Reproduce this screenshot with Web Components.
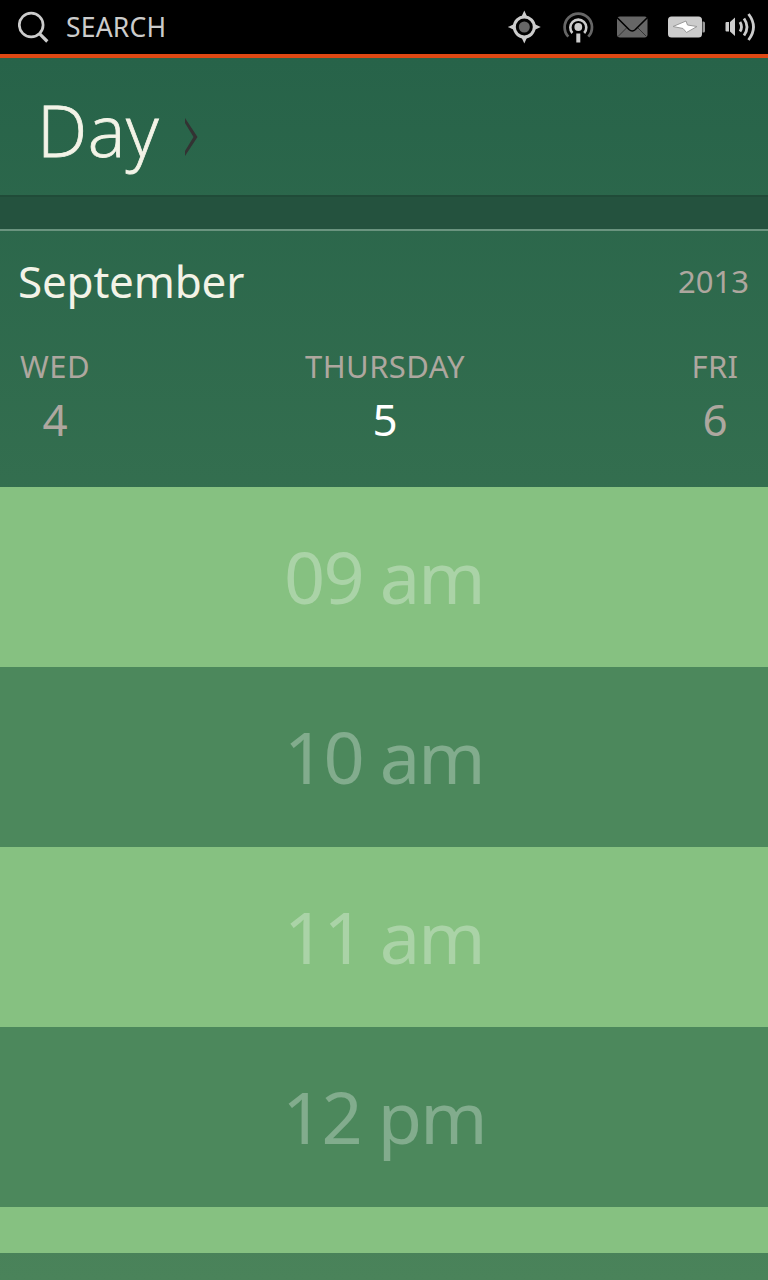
<!DOCTYPE html>
<html lang="en">
<head>
<meta charset="utf-8">
<title>Calendar</title>
<style>
  html, body {
    margin: 0;
    height: 100%;
    overflow: hidden;
  }

  body {
    background: #000;
    font-family: "Noto Sans", "Open Sans", sans-serif;
  }
</style>
</head>
<body>
<calendar-app></calendar-app>

<script>
class StatusBar extends HTMLElement {
  constructor() {
    super()
    this.attachShadow({ mode: 'open' })
  }

  connectedCallback() {
    this.render()
  }

  render() {
    this.shadowRoot.innerHTML = `
      <style>
        :host {
          height: 58px;
          padding: 0 8px 0 18px;

          display: flex;
          align-items: center;

          box-sizing: border-box;
          background-color: #000;
          border-bottom: 4px solid #dd4814;
          color: #ccc;
        }

        .search {
          flex: 1;

          display: flex;
          align-items: center;
          gap: 16px;

          font-size: 26.5px;
          line-height: 54px;
          letter-spacing: 0.2px;
        }

        .icons {
          display: flex;
          gap: 18px;
        }

        svg {
          display: block;
        }
      </style>

      <div class="search">
        <svg width="32" height="34" viewBox="0 0 32 34" fill="none" stroke="#ccc">
          <circle cx="13.2" cy="15" r="11.9" stroke-width="2.7"/>
          <path d="M21 23.2L29.3 31.5" stroke-width="3.2"/>
        </svg>
        <slot></slot>
      </div>
      <div class="icons">
        <svg width="36" height="36" viewBox="0 0 36 36">
          <path d="M18.3 1.5L21.3 8L28.3 15L34.8 18L28.3 21L21.3 28L18.3 34.5L15.3 28L8.3 21L1.8 18L8.3 15L15.3 8Z" fill="#ccc"/>
          <circle cx="18.3" cy="18" r="10" fill="#000" stroke="#ccc" stroke-width="3"/>
          <circle cx="18.3" cy="18" r="5.5" fill="#666"/>
        </svg>
        <svg width="36" height="36" viewBox="0 0 36 36" fill="none">
          <path d="M8.3 27.7A13.7 13.7 0 1 1 28.3 27.7" stroke="#666" stroke-width="2.7"/>
          <path d="M12.4 24A8 8 0 1 1 24.2 24" stroke="#ccc" stroke-width="2.6"/>
          <circle cx="18.3" cy="18" r="3.9" fill="#ccc"/>
          <rect x="16.3" y="24.5" width="4" height="9" fill="#ccc"/>
        </svg>
        <svg width="36" height="36" viewBox="0 0 36 36" fill="none">
          <rect x="3" y="7.5" width="30.5" height="21" rx="3" fill="#666"/>
          <path d="M3 8.5L15 20.5Q18.2 23.5 21.4 20.5L33.5 8.5" stroke="#000" stroke-width="1.6"/>
          <path d="M4 27.5L12.5 19M32.5 27.5L24 19" stroke="#333" stroke-width="1"/>
        </svg>
        <svg width="38" height="36" viewBox="0 0 38 36">
          <rect x="0" y="7.5" width="34" height="21" rx="3.5" fill="#ccc"/>
          <path d="M34.5 12.5H35.5Q37 12.5 37 14V22Q37 23.5 35.5 23.5H34.5Z" fill="#999"/>
          <path d="M5 17.5L18 12L19.5 16L29 17.5L18.5 23.5L15 19.5Z" fill="#fff" stroke="#999" stroke-width="1"/>
        </svg>
        <svg width="36" height="36" viewBox="0 0 36 36" fill="none" stroke="#ccc">
          <path d="M1.5 14Q1.5 13 2.5 13H5V22.5H2.5Q1.5 22.5 1.5 21.5ZM6 13L11 8.5V27L6 22.5Z" fill="#ccc" stroke="none"/>
          <path d="M16 13Q19 18 16 22.5M20 9.5Q26 18 20 26.5M24.5 5Q34.5 18 24.5 31" stroke-width="2.8"/>
        </svg>
      </div>
    `
  }
}

customElements.define('status-bar', StatusBar)

class PageHeader extends HTMLElement {
  constructor() {
    super()
    this.attachShadow({ mode: 'open' })
  }

  connectedCallback() {
    this.render()
  }

  render() {
    this.shadowRoot.innerHTML = `
      <style>
        :host {
          display: block;
        }

        .title {
          height: 137px;
          padding: 5px 0 0 37px;

          display: flex;
          align-items: center;
          gap: 26px;

          box-sizing: border-box;
          font-family: "Open Sans", "Noto Sans", sans-serif;
          font-size: 71px;
          font-weight: 300;
          letter-spacing: 0.6px;
          color: #f3f3e7;
          -webkit-text-stroke: 0.8px #f3f3e7;
        }

        svg {
          margin-top: 16px;
        }

        .divider {
          height: 36px;

          box-sizing: border-box;
          background-color: #24523e;
          border-top: 2px solid #204b38;
          border-bottom: 2px solid #6a947f;
        }
      </style>

      <div class="title">
        <slot></slot>
        <svg width="13" height="38" viewBox="0 0 13 38">
          <path d="M0 0L12.5 19L0 38V33L8.5 19L0 5Z" fill="#333"/>
        </svg>
      </div>
      <div class="divider"></div>
    `
  }
}

customElements.define('page-header', PageHeader)

class WeekDay extends HTMLElement {
  constructor() {
    super()
    this.attachShadow({ mode: 'open' })
  }

  connectedCallback() {
    this.render()
  }

  render() {
    this.shadowRoot.innerHTML = `
      <style>
        :host {
          display: flex;
          flex-direction: column;
          align-items: center;
          gap: 3px;

          color: #aea79f;
        }

        .name {
          font-size: 31px;
          line-height: 40px;
          letter-spacing: 0.4px;
        }

        .date {
          font-size: 44px;
          line-height: 60px;
        }

        :host([current]) .date {
          color: #fff;
        }
      </style>

      <div class="name"><slot></slot></div>
      <div class="date">${this.getAttribute('date')}</div>
    `
  }
}

customElements.define('week-day', WeekDay)

class MonthPanel extends HTMLElement {
  constructor() {
    super()
    this.attachShadow({ mode: 'open' })
  }

  connectedCallback() {
    this.render()
  }

  render() {
    this.shadowRoot.innerHTML = `
      <style>
        :host {
          height: 256px;
          padding-top: 20px;

          display: block;

          box-sizing: border-box;
        }

        .month {
          height: 60px;
          padding: 0 19px 0 18px;

          display: flex;
          align-items: center;
          justify-content: space-between;

          font-size: 44px;
          color: #f3f3e7;
        }

        .name {
          letter-spacing: -0.2px;
        }

        .year {
          font-size: 31px;
          color: #aea79f;
        }

        .days {
          margin-top: 35px;

          display: grid;
          grid-template-columns: 110px 550px 110px;
        }
      </style>

      <div class="month">
        <span class="name">${this.getAttribute('month')}</span>
        <span class="year">${this.getAttribute('year')}</span>
      </div>
      <div class="days"><slot></slot></div>
    `
  }
}

customElements.define('month-panel', MonthPanel)

class HourRow extends HTMLElement {
  constructor() {
    super()
    this.attachShadow({ mode: 'open' })
  }

  connectedCallback() {
    this.render()
  }

  render() {
    this.shadowRoot.innerHTML = `
      <style>
        :host {
          height: 180px;
          padding-bottom: 2px;

          display: flex;
          flex: none;
          align-items: center;
          justify-content: center;

          box-sizing: border-box;
          background-color: #4c885c;
          font-size: 72px;
          letter-spacing: -1.8px;
          color: rgba(255, 255, 255, 0.3);
        }

        :host(:nth-child(odd)) {
          background-color: #86c181;
        }

        :host([last]) {
          height: 46px;
        }
      </style>

      <slot></slot>
    `
  }
}

customElements.define('hour-row', HourRow)

class CalendarApp extends HTMLElement {
  constructor() {
    super()
    this.attachShadow({ mode: 'open' })
  }

  connectedCallback() {
    this.render()
  }

  render() {
    this.shadowRoot.innerHTML = `
      <style>
        :host {
          height: 1280px;

          display: flex;
          flex-direction: column;

          overflow: hidden;
        }

        main {
          flex: 1;

          background: linear-gradient(#276349, #4a835a);
        }
      </style>

      <status-bar>SEARCH</status-bar>
      <main>
        <page-header>Day</page-header>
        <month-panel month="September" year="2013">
          <week-day date="4">WED</week-day>
          <week-day date="5" current>THURSDAY</week-day>
          <week-day date="6">FRI</week-day>
        </month-panel>
        <div class="hours">
          <hour-row>09 am</hour-row>
          <hour-row>10 am</hour-row>
          <hour-row>11 am</hour-row>
          <hour-row>12 pm</hour-row>
          <hour-row last></hour-row>
        </div>
      </main>
    `
  }
}

customElements.define('calendar-app', CalendarApp)
</script>
</body>
</html>
